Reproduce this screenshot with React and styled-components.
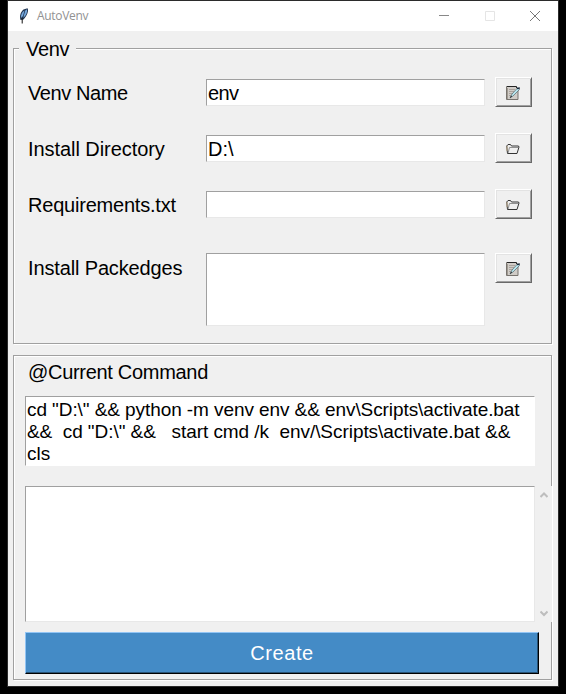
import React from "react";
import styled, { createGlobalStyle } from "styled-components";

const GlobalStyle = createGlobalStyle`
  * { box-sizing: border-box; }
  html, body { margin: 0; background: #000; }
  body { font-family: "Liberation Sans", Arial, sans-serif; color: #000; overflow: hidden; }
  svg { display: block; }
`;

const Desktop = styled.div`
  width: 566px;
  height: 694px;
  padding-left: 7px;
  background: #000;
`;

const Window = styled.main`
  width: 552px;
  height: 687px;
  border: 1px solid #2b2b2b;
  background: #f0f0f0;
`;

const TitleBar = styled.header`
  display: flex;
  align-items: center;
  height: 30px;
  padding-left: 10px;
  background: #fff;
`;

const Title = styled.span`
  flex: 1;
  margin-left: 7px;
  font: 12px/30px "Open Sans", sans-serif;
  letter-spacing: -0.3px;
  color: #929292;
`;

const CaptionButton = styled.span`
  display: flex;
  align-items: center;
  justify-content: center;
  width: 45.5px;
  height: 28px;
`;

const Body = styled.div`
  display: flex;
  flex-direction: column;
  gap: 11px;
  padding: 17px 6px 0 5px;
`;

const Group = styled.section`
  width: 539px;
  height: ${(p) => p.$height}px;
  border: 1px solid #a0a0a0;
  box-shadow: 1px 1px 0 #fff, inset 1px 1px 0 #fff;
`;

const Legend = styled.h1`
  width: 57px;
  height: 24px;
  margin: -12px 0 0 5px;
  padding-left: 7px;
  background: #f0f0f0;
  font-size: 20px;
  font-weight: 400;
  line-height: 25px;
  letter-spacing: -0.3px;
`;

const Form = styled.div`
  display: flex;
  flex-direction: column;
  gap: 26px;
  padding-top: 16px;
`;

const Row = styled.div`
  display: grid;
  grid-template-columns: 178px 279px 37px;
  align-items: start;
  padding-left: 14px;
  margin-top: ${(p) => p.$offset || 0}px;
  height: 30px;
`;

const Label = styled.label`
  font-size: 20px;
  line-height: ${(p) => (p.$raised ? 30 : 32)}px;
  white-space: nowrap;
  letter-spacing: ${(p) => p.$tracking};
`;

const Sunken = styled.div`
  border: 1px solid;
  border-color: #a0a0a0 #e8e8e8 #e8e8e8 #a0a0a0;
  background: #fff;
`;

const Entry = styled(Sunken)`
  height: ${(p) => p.$height || 27}px;
  margin-top: ${(p) => (p.$height ? 0 : 2)}px;
  padding-left: 1px;
  font-size: 20px;
  line-height: 26px;
  letter-spacing: ${(p) => p.$tracking || "0"};
`;

const IconButton = styled.button`
  display: flex;
  align-items: center;
  justify-content: center;
  width: 37px;
  height: 30px;
  margin-left: 10px;
  padding: 1px 1px 0 0;
  border: 1px solid;
  border-color: #fff #696969 #696969 #fff;
  box-shadow: inset 1px 1px 0 #e3e3e3, inset -1px -1px 0 #a0a0a0;
  background: #f0f0f0;
`;

const CommandHeading = styled.h2`
  height: 32px;
  margin: 0 0 8px 14px;
  font-size: 20px;
  font-weight: 400;
  line-height: 32px;
  letter-spacing: -0.3px;
`;

const CommandText = styled(Sunken)`
  width: 510px;
  height: 70px;
  margin-left: 11px;
  padding: 2px 0 0 1px;
  border-right-color: #fff;
  border-bottom-color: #fff;
  font-size: 19px;
  line-height: 22px;
  white-space: pre;
`;

const CommandLine = styled.div`
  letter-spacing: ${(p) => p.$tracking};
`;

const OutputRow = styled.div`
  display: flex;
  gap: 1px;
  width: 527px;
  height: 136px;
  margin: 20px 0 10px 11px;
`;

const Output = styled(Sunken)`
  width: 510px;
`;

const ScrollBar = styled.div`
  display: flex;
  flex-direction: column;
  justify-content: space-between;
  align-items: center;
  width: 16px;
  padding: 5px 1px 4px 0;
  background: #f0f0f0;
`;

const CreateButton = styled.button`
  display: block;
  width: 514px;
  height: 42px;
  margin-left: 11px;
  padding: 0;
  border: 1px solid;
  border-color: #92c5f5 #000 #000 #92c5f5;
  box-shadow: inset -1px -1px 0 #285274;
  background: #448bc6;
  color: #fff;
  font: 20px/40px "Liberation Sans", Arial, sans-serif;
  letter-spacing: 0.6px;
`;

const Feather = () => (
  <svg width="12" height="16" viewBox="0 0 12 16">
    <path d="M2.5 12C1.3 8 2.5 4 5.5 1.5L9.5 .3C11 3 9 8 5.5 11.5Z" fill="#20344f" />
    <path d="M3 10C2.8 6.5 4 4 6.5 2.5L5 8ZM5.3 10C8.5 7 9.5 4 9 1.3L7.3 2.5L6 7Z" fill="#76a9de" />
    <path d="M4.2 10.5V15.5" stroke="#111" fill="none" />
  </svg>
);

const NoteIcon = () => (
  <svg width="14" height="14" viewBox="0 0 14 14">
    <path d="M.5.5H10L12 3V13.5H.5Z" fill="#d0ccc7" stroke="#77736e" />
    <path d="M1 .5H10.5V2" stroke="#242424" fill="none" />
    <path d="M1.5 2V13" stroke="#a09a91" />
    <path d="M3 3.5H9M3 5.5H8M3 7.5H7M3 9.5H5" stroke="#aaa39d" />
    <path d="M4 12L6 8L11.5 2L13.5 3.5L7 10Z" fill="#b8e6ef" stroke="#53656c" strokeWidth=".7" />
    <path d="M11 2.5L13.8 2" stroke="#17283b" strokeWidth="1.5" />
    <path d="M4 11.5L6 10" stroke="#333" />
  </svg>
);

const FolderIcon = () => (
  <svg width="14" height="12" viewBox="0 0 14 12">
    <path d="M1.5 10.5L.7 3L2 1.5H4.5L5.5 3H12.5L13 4L11 10.5Z" fill="#efefef" stroke="#333" />
    <path d="M2 10L3.5 4.5H12.5" fill="none" stroke="#777" strokeWidth=".8" />
    <path d="M1 3V8" stroke="#b4a183" />
  </svg>
);

const Chevron = ({ down }) => (
  <svg width="8" height="8" viewBox="0 0 8 8">
    <path d={down ? "M.5 1.5L4 5L7.5 1.5" : "M.5 6L4 2.5L7.5 6"} fill="none" stroke="#bdbdbd" strokeWidth="2" />
  </svg>
);

const fields = [
  { label: "Venv Name", tracking: "-0.4px", value: "env", valueTracking: "-0.6px", Icon: NoteIcon },
  { label: "Install Directory", tracking: "-0.06px", value: "D:\\", Icon: FolderIcon },
  { label: "Requirements.txt", tracking: "-0.21px", value: "", Icon: FolderIcon },
  { label: "Install Packedges", tracking: "-0.14px", value: "", Icon: NoteIcon, height: 73, offset: 8 },
];

const commandLines = [
  { text: 'cd "D:\\" && python -m venv env && env\\Scripts\\activate.bat', tracking: "-0.08px" },
  { text: '&&  cd "D:\\" &&   start cmd /k  env/\\Scripts\\activate.bat &&', tracking: "-0.055px" },
  { text: "cls", tracking: "0" },
];

export default function App() {
  return (
    <Desktop>
      <GlobalStyle />
      <Window>
        <TitleBar>
          <Feather />
          <Title>AutoVenv</Title>
          <CaptionButton>
            <svg width="10" height="10"><path d="M0 4.5H10" stroke="#888" /></svg>
          </CaptionButton>
          <CaptionButton>
            <svg width="10" height="10"><path d="M.5.5H9.5V9.5H.5Z" fill="none" stroke="#e5e5e5" /></svg>
          </CaptionButton>
          <CaptionButton>
            <svg width="10" height="10"><path d="M0 0L10 10M10 0L0 10" stroke="#777" /></svg>
          </CaptionButton>
        </TitleBar>
        <Body>
          <Group $height={296}>
            <Legend>Venv</Legend>
            <Form>
              {fields.map(({ label, tracking, value, valueTracking, Icon, height, offset }) => (
                <Row key={label} $offset={offset}>
                  <Label $tracking={tracking} $raised={Boolean(height)}>{label}</Label>
                  <Entry $height={height} $tracking={valueTracking}>{value}</Entry>
                  <IconButton aria-label={label}><Icon /></IconButton>
                </Row>
              ))}
            </Form>
          </Group>
          <Group $height={325}>
            <CommandHeading>@Current Command</CommandHeading>
            <CommandText>
              {commandLines.map(({ text, tracking }) => (
                <CommandLine key={text} $tracking={tracking}>{text}</CommandLine>
              ))}
            </CommandText>
            <OutputRow>
              <Output />
              <ScrollBar><Chevron /><Chevron down /></ScrollBar>
            </OutputRow>
            <CreateButton>Create</CreateButton>
          </Group>
        </Body>
      </Window>
    </Desktop>
  );
}
